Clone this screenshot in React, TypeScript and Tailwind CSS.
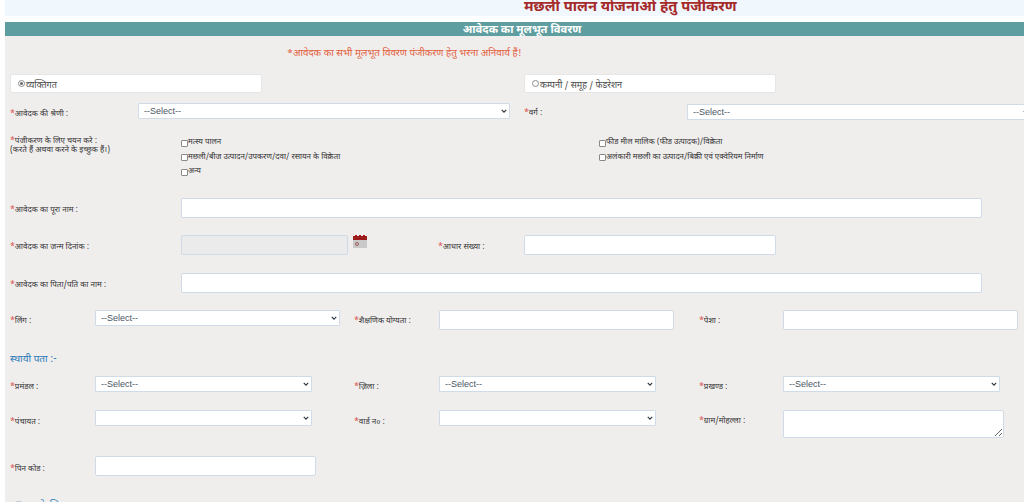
import type { ReactNode } from 'react'

const devanagari = "font-['Noto_Sans_Devanagari','Lohit_Devanagari','Noto_Sans','Liberation_Sans',sans-serif]"

function Label({ children, className = '' }: { children: ReactNode; className?: string }) {
  return (
    <label className={`block shrink-0 text-[8px] leading-[11px] text-[#333333] ${className}`}>
      <span className="text-[#d9534f]">*</span>
      {children}
    </label>
  )
}

function Select({ className = '', empty = false }: { className?: string; empty?: boolean }) {
  return (
    <div className={`relative h-4 shrink-0 ${className}`}>
      <select className="block h-full w-full appearance-none rounded-[1px] border border-[#cfdce8] bg-white pt-px pl-[5px] text-[9px] text-[#4b5563] font-['Liberation_Sans',sans-serif] outline-none">
        {!empty && <option>--Select--</option>}
      </select>
      <svg viewBox="0 0 8 5" className="pointer-events-none absolute top-[6px] right-[3px] h-[4px] w-[6px]">
        <path d="M1 1l3 3 3-3" fill="none" stroke="#2f3a45" strokeWidth="1.6" />
      </svg>
    </div>
  )
}

function Input({ className = '' }: { className?: string }) {
  return <input className={`block h-5 shrink-0 rounded-[2px] border border-[#cfdce8] bg-white outline-none ${className}`} />
}

function Check({ text }: { text: string }) {
  return (
    <label className="flex h-[14.5px] items-center text-[7.9px] text-[#333333]">
      <input type="checkbox" className="m-0 h-[7px] w-[7px] appearance-none rounded-[1px] border border-[#8a8a8a] bg-white" />
      {text}
    </label>
  )
}

function Radio({ text, checked = false }: { text: string; checked?: boolean }) {
  return (
    <div className="flex h-[19px] w-[252px] shrink-0 items-center rounded-[2px] border border-[#e6e6e6] bg-white pl-[7px] text-[9px] text-[#4a4a4a]">
      <span className="mr-px flex h-[7px] w-[7px] items-center justify-center rounded-full border border-[#8a8a8a]">
        {checked && <span className="h-[3px] w-[3px] rounded-full bg-[#666]" />}
      </span>
      <span className="pt-[4px] leading-[12px]">{text}</span>
    </div>
  )
}

function CalendarIcon() {
  return (
    <svg viewBox="0 0 14 13" className="ml-[5px] h-[13px] w-[14px] shrink-0">
      <rect x="0" y="4" width="14" height="9" fill="#c9c9c9" />
      <rect x="0" y="1" width="14" height="4" fill="#9c1c1c" />
      <rect x="2" y="0" width="2" height="2" fill="#9c1c1c" />
      <rect x="6" y="0" width="2" height="2" fill="#9c1c1c" />
      <rect x="10" y="0" width="2" height="2" fill="#9c1c1c" />
      <circle cx="4" cy="9" r="1.5" fill="none" stroke="#a05a5a" />
    </svg>
  )
}

export default function App() {
  return (
    <div className={`h-[502px] w-[1024px] overflow-hidden bg-white pl-[5px] ${devanagari}`}>
      {/* title */}
      <div className="h-4 overflow-hidden bg-[#f0f7fd] pl-[519px]">
        <h1 className="whitespace-nowrap text-[14.7px] leading-[16px] font-bold text-[#a52a2a]">
          मछली पालन योजनाओं हेतु पंजीकरण
        </h1>
      </div>
      <div className="mt-[6px] h-[14px] bg-[#5f9ea0] pl-[15px] text-center text-[11.2px] leading-[17px] font-bold text-white">
        आवेदक का मूलभूत विवरण
      </div>

      <div className="h-[466px] bg-[#f0eded] pl-[5px]">
        <p className="pt-[11px] pl-[277px] text-[9.8px] leading-[14px] text-[#e2603c]">
          *आवेदक का सभी मूलभूत विवरण पंजीकरण हेतु भरना अनिवार्य हैं!
        </p>

        {/* applicant type */}
        <div className="mt-[13px] flex">
          <Radio checked text="व्यक्तिगत" />
          <div className="ml-[262px]">
            <Radio text="कम्पनी / समूह / फेडरेशन" />
          </div>
        </div>

        {/* category */}
        <div className="mt-[10px] flex h-[17px] items-start">
          <Label className="mt-[6px] w-[128px]">आवेदक की श्रेणी :</Label>
          <Select className="w-[372px]" />
          <Label className="mt-[5px] ml-[14px] w-[163px]">वर्ग :</Label>
          <Select className="mt-px w-[345px]" />
        </div>

        {/* registration choice */}
        <div className="mt-[14px] flex h-[46px]">
          <div className="w-[171px] shrink-0">
            <Label className="mt-[2px] -mb-[2px]">पंजीकरण के लिए चयन करे :</Label>
            <p className="text-[8px] leading-[10px] text-[#333333]">(करते हैं अथवा करने के इच्छुक हैं।)</p>
          </div>
          <div className="mt-[2px] w-[418px] shrink-0">
            <Check text="मत्स्य पालन" />
            <Check text="मछली/बीज उत्पादन/उपकरण/दवा/ रसायन के विक्रेता" />
            <Check text="अन्य" />
          </div>
          <div className="mt-[2px]">
            <Check text="फीड मील मालिक (फीड उत्पादक)/विक्रेता" />
            <Check text="अलंकारी मछली का उत्पादन/बिक्री एवं एक्वेरियम निर्माण" />
          </div>
        </div>

        {/* name */}
        <div className="mt-[18px] flex items-start">
          <Label className="mt-[7px] w-[171px]">आवेदक का पूरा नाम :</Label>
          <Input className="w-[801px]" />
        </div>

        {/* dob and aadhaar */}
        <div className="mt-[17px] flex items-start">
          <Label className="mt-[7px] w-[171px]">आवेदक का जन्म दिनांक :</Label>
          <Input className="w-[167px] !bg-[#ebebeb]" />
          <CalendarIcon />
          <Label className="mt-[7px] ml-[71px] w-[86px]">आधार संख्या :</Label>
          <Input className="w-[252px]" />
        </div>

        {/* father */}
        <div className="mt-[18px] flex items-start">
          <Label className="mt-[7px] w-[171px]">आवेदक का पिता/पति का नाम :</Label>
          <Input className="w-[801px]" />
        </div>

        {/* gender, education, job */}
        <div className="mt-[17px] flex items-start">
          <Label className="mt-[6px] w-[85px]">लिंग :</Label>
          <Select className="w-[245px]" />
          <Label className="mt-[6px] ml-[14px] w-[85px]">शैक्षणिक योग्यता :</Label>
          <Input className="w-[235px]" />
          <Label className="mt-[6px] ml-[25px] w-[84px]">पेशा :</Label>
          <Input className="w-[235px]" />
        </div>

        <h2 className="mt-[22px] text-[10px] leading-[16px] text-[#2b7bb9]">स्थायी पता :-</h2>

        {/* division, district, block */}
        <div className="mt-[8px] flex items-start">
          <Label className="mt-[6px] w-[85px]">प्रमंडल :</Label>
          <Select className="w-[217px]" />
          <Label className="mt-[6px] ml-[42px] w-[85px]">ज़िला :</Label>
          <Select className="w-[217px]" />
          <Label className="mt-[6px] ml-[43px] w-[84px]">प्रखण्ड :</Label>
          <Select className="w-[217px]" />
        </div>

        {/* panchayat, ward, village */}
        <div className="mt-[17px] flex items-start">
          <Label className="mt-[7px] w-[85px]">पंचायत :</Label>
          <Select empty className="w-[217px]" />
          <Label className="mt-[7px] ml-[42px] w-[85px]">वार्ड न० :</Label>
          <Select empty className="w-[217px]" />
          <Label className="mt-[6px] ml-[43px] w-[84px]">ग्राम/मोहल्ला :</Label>
          <textarea className="h-[28px] w-[221px] rounded-[2px] border border-[#cfdce8] bg-white outline-none" />
        </div>

        {/* pin */}
        <div className="mt-[18px] flex items-start">
          <Label className="mt-[8px] w-[85px]">पिन कोड :</Label>
          <Input className="w-[221px]" />
        </div>

        <h2 className="mt-[22px] text-[10px] leading-[16px] text-[#2b7bb9]">पत्राचार के लिए पता :-</h2>
      </div>
    </div>
  )
}
